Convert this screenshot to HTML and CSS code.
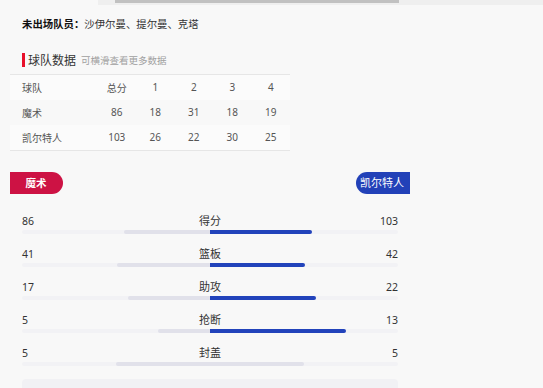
FILE: index.html
```html
<!DOCTYPE html>
<html lang="zh">
<head>
    <meta charset="UTF-8">
    <title>比赛数据</title>
    <link rel="stylesheet" href="styles.css">
</head>
<body>
    <div class="scroll-track"><div class="scroll-thumb"></div></div>

    <p class="absent"><b>未出场队员：</b>沙伊尔曼、提尔曼、克塔</p>

    <div class="sec-title">
        <span class="bar"></span>
        <span class="name">球队数据</span>
        <span class="hint">可横滑查看更多数据</span>
    </div>

    <table class="score">
        <tr>
            <td class="team">球队</td><td>总分</td><td>1</td><td>2</td><td>3</td><td>4</td>
        </tr>
        <tr>
            <td class="team">魔术</td><td>86</td><td>18</td><td>31</td><td>18</td><td>19</td>
        </tr>
        <tr>
            <td class="team">凯尔特人</td><td>103</td><td>26</td><td>22</td><td>30</td><td>25</td>
        </tr>
    </table>

    <div class="compare">
        <div class="badges">
            <span class="badge home">魔术</span>
            <span class="badge away">凯尔特人</span>
        </div>

        <div class="stat">
            <div class="line"><span>86</span><span>得分</span><span>103</span></div>
            <div class="track">
                <div class="half left"><i class="fill gray" style="width:45.5%"></i></div>
                <div class="half right"><i class="fill blue" style="width:54.5%"></i></div>
            </div>
        </div>
        <div class="stat">
            <div class="line"><span>41</span><span>篮板</span><span>42</span></div>
            <div class="track">
                <div class="half left"><i class="fill gray" style="width:49.4%"></i></div>
                <div class="half right"><i class="fill blue" style="width:50.6%"></i></div>
            </div>
        </div>
        <div class="stat">
            <div class="line"><span>17</span><span>助攻</span><span>22</span></div>
            <div class="track">
                <div class="half left"><i class="fill gray" style="width:43.6%"></i></div>
                <div class="half right"><i class="fill blue" style="width:56.4%"></i></div>
            </div>
        </div>
        <div class="stat">
            <div class="line"><span>5</span><span>抢断</span><span>13</span></div>
            <div class="track">
                <div class="half left"><i class="fill gray" style="width:27.8%"></i></div>
                <div class="half right"><i class="fill blue" style="width:72.2%"></i></div>
            </div>
        </div>
        <div class="stat">
            <div class="line"><span>5</span><span>封盖</span><span>5</span></div>
            <div class="track">
                <div class="half left"><i class="fill gray" style="width:50%"></i></div>
                <div class="half right"><i class="fill gray" style="width:50%"></i></div>
            </div>
        </div>

        <div class="more"></div>
    </div>
</body>
</html>
```

FILE: styles.css
```css
body {
    margin: 0;
    background-color: #f8f8f8;
    font-family: "Noto Sans", "Noto Sans CJK SC", sans-serif;
    color: #333;
    overflow: hidden;
}
.scroll-track {
    margin-left: 98px;
    height: 5px;
    background-color: #efefef;
}
.scroll-thumb {
    margin-left: 17px;
    width: 284px;
    height: 3px;
    background-color: #c1c1c1;
}
.absent {
    margin: 11px 0 0 22px;
    font-size: 10.4px;
    line-height: 16px;
    color: #333;
}
.absent b { color: #111; }

.sec-title {
    display: flex;
    align-items: center;
    margin: 20px 0 6px 22px;
    height: 16px;
}
.sec-title .bar {
    width: 3px;
    height: 14px;
    background-color: #e8102a;
    margin-right: 3px;
}
.sec-title .name {
    font-size: 12px;
    color: #333;
}
.sec-title .hint {
    font-size: 9.5px;
    color: #a0a0a0;
    margin-left: 5px;
}

.score {
    margin-left: 10px;
    width: 280px;
    border-collapse: collapse;
    border-top: 1px solid #e6e6e6;
    border-bottom: 1px solid #e6e6e6;
    font-size: 10px;
    color: #555;
}
.score tr { height: 25.3px; }
.score tr:nth-child(odd) { background-color: #fbfbfb; }
.score td {
    padding: 0;
    width: 38.5px;
    text-align: center;
}
.score td.team {
    width: auto;
    padding-left: 12px;
    text-align: left;
}

.compare {
    width: 400px;
    margin: 21px 0 0 10px;
}
.badges {
    display: flex;
    justify-content: space-between;
    margin-bottom: 19px;
}
.badge {
    height: 22px;
    line-height: 22px;
    color: white;
    font-size: 11px;
}
.badge.home {
    width: 53px;
    padding-right: 1px;
    box-sizing: border-box;
    text-align: center;
    background-color: #cd1244;
    border-radius: 0 11px 11px 0;
    font-weight: bold;
    font-size: 10.5px;
}
.badge.away {
    padding: 0 6px 0 4px;
    background-color: #2241b8;
    border-radius: 11px 0 0 11px;
}

.stat {
    margin: 0 12px 12px;
}
.line {
    display: flex;
    justify-content: space-between;
    font-size: 10.5px;
    line-height: 16px;
    color: #333;
}
.line span { width: 40px; }
.line span:nth-child(2) { text-align: center; font-size: 11px; }
.line span:last-child { text-align: right; }
.track {
    display: flex;
    height: 4px;
    margin-top: 1px;
    background-color: #f2f2f5;
    border-radius: 2px;
}
.half {
    flex: 1;
    display: flex;
}
.half.left { justify-content: flex-end; }
.fill {
    display: block;
    height: 4px;
}
.left .fill { border-radius: 2px 0 0 2px; }
.right .fill { border-radius: 0 2px 2px 0; }
.fill.gray { background-color: #e1e1ea; }
.fill.blue { background-color: #2243bb; }

.more {
    margin: 13px 12px 0;
    height: 30px;
    background-color: #f1f1f4;
    border-radius: 4px 4px 0 0;
}
```
